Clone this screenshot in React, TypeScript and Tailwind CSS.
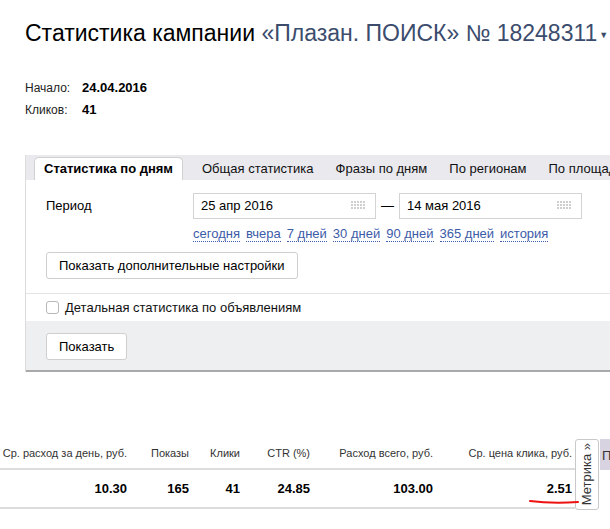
import React from 'react';

const FONT = { fontFamily: '"Liberation Sans", Arial, sans-serif' };

const tabs = ['Общая статистика', 'Фразы по дням', 'По регионам', 'По площадкам'];
const periods = ['сегодня', 'вчера', '7 дней', '30 дней', '90 дней', '365 дней', 'история'];

const columns = [
  { title: 'Ср. расход за день, руб.', value: '10.30', width: 'w-[127px]' },
  { title: 'Показы', value: '165', width: 'w-[62px]' },
  { title: 'Клики', value: '41', width: 'w-[51px]' },
  { title: 'CTR (%)', value: '24.85', width: 'w-[70px]' },
  { title: 'Расход всего, руб.', value: '103.00', width: 'w-[123px]' },
  { title: 'Ср. цена клика, руб.', value: '2.51', width: 'w-[139px]' },
];

const CalendarIcon: React.FC = () => (
  <svg width="15" height="9" viewBox="0 0 15 9" className="shrink-0">
    {[0, 1, 2].map(r =>
      [0, 1, 2, 3, 4].map(c => (
        <rect key={`${r}-${c}`} x={c * 3} y={r * 3} width="2" height="2" fill="#cfcfcf" />
      ))
    )}
  </svg>
);

const DateInput: React.FC<{ value: string }> = ({ value }) => (
  <div className="flex items-center justify-between w-[183px] h-[26px] border border-[#d3d3d3] pl-[7px] pr-[9px] text-[13px] text-black bg-white">
    <span>{value}</span>
    <CalendarIcon />
  </div>
);

const App: React.FC = () => {
  return (
    <div className="w-[610px] h-[529px] overflow-hidden bg-white text-black" style={FONT}>
      {/* Title */}
      <div className="pl-[25px] pt-[17px] whitespace-nowrap text-[23px] leading-[32px]">
        <span>Статистика кампании </span>
        <span className="text-[#3b4c6d]">«Плазан. ПОИСК» № 18248311</span>
        <span className="text-[#3b4c6d] text-[9px] align-middle ml-[2px]">▼</span>
      </div>

      {/* Summary */}
      <div className="pl-[25px] pt-[26px] text-[12px] leading-[21px]">
        <div className="flex items-baseline">
          <span className="w-[57px] text-[#222]">Начало:</span>
          <span className="font-bold text-[13px]">24.04.2016</span>
        </div>
        <div className="flex items-baseline">
          <span className="w-[57px] text-[#222]">Кликов:</span>
          <span className="font-bold text-[13px]">41</span>
        </div>
      </div>

      {/* Panel */}
      <div className="ml-[25px] mt-[34px] w-[620px] border-l border-[#dcdcdc] text-[13px]">
        <div className="flex items-end h-[25px] bg-[#e9e9ee] pl-[8px] whitespace-nowrap">
          <div className="h-[23px] px-[9px] mr-[8px] flex items-center bg-white border border-b-0 border-[#d0d0d0] rounded-t-[5px] font-bold">
            Статистика по дням
          </div>
          {tabs.map(t => (
            <div key={t} className="h-[23px] px-[11px] first:pl-0 flex items-center text-[#111]">
              {t}
            </div>
          ))}
        </div>

        <div className="pl-[20px] pt-[13px] pb-[14px] border-b border-[#e5e5e5]">
          <div className="flex">
            <div className="w-[147px] pt-[3px]">Период</div>
            <div>
              <div className="flex items-center gap-[5px]">
                <DateInput value="25 апр 2016" />
                <span>—</span>
                <DateInput value="14 мая 2016" />
              </div>
              <div className="flex gap-[6px] mt-[8px] text-[#3c5ba8] whitespace-nowrap">
                {periods.map(p => (
                  <span key={p} className="border-b border-dotted border-[#3c5ba8] leading-[14px]">{p}</span>
                ))}
              </div>
            </div>
          </div>
          <button className="mt-[10px] h-[27px] px-[12px] bg-white border border-[#cfcfcf] rounded-[3px]">
            Показать дополнительные настройки
          </button>
        </div>

        <label className="flex items-center h-[27px] pl-[20px] text-[#111]">
          <span className="w-[13px] h-[13px] border border-[#b8b8b8] rounded-[3px] bg-white mr-[6px]" />
          Детальная статистика по объявлениям
        </label>

        <div className="h-[51px] bg-[#eeeff1] border-b-2 border-[#a9a9a9] pl-[20px] pt-[12px]">
          <button className="h-[27px] px-[12px] bg-white border border-[#cfcfcf] rounded-[3px]">
            Показать
          </button>
        </div>
      </div>

      {/* Table */}
      <div className="relative mt-[67px] flex">
        <div className="w-[578px]">
          <div className="flex h-[31px] items-center border-b-2 border-[#dcdcdc] text-[11px] text-[#333] whitespace-nowrap">
            {columns.map(c => (
              <div key={c.title} className={`${c.width} text-right shrink-0`}>{c.title}</div>
            ))}
          </div>
          <div className="flex h-[39px] items-center border-b-2 border-[#dcdcdc] text-[13px] font-bold">
            {columns.map(c => (
              <div key={c.title} className={`${c.width} text-right shrink-0`}>{c.value}</div>
            ))}
          </div>
        </div>
        <div className="w-[24px] h-[71px] border border-[#c9c9c9] rounded-[3px] bg-white flex items-center justify-center">
          <span className="[writing-mode:vertical-rl] rotate-180 text-[13px] text-[#333] whitespace-nowrap">Метрика »</span>
        </div>
        <div className="ml-[1px] w-[10px] h-[31px] bg-[#d8d3e1] text-[13px] text-[#333] pl-[2px] pt-[7px] overflow-hidden">П</div>

        <svg className="absolute left-[528px] top-[59px]" width="52" height="8" viewBox="0 0 52 8">
          <path d="M2 3 C 18 5, 34 5, 50 4" stroke="#e11" strokeWidth="2" fill="none" strokeLinecap="round" />
        </svg>
      </div>
    </div>
  );
};

export default App;
